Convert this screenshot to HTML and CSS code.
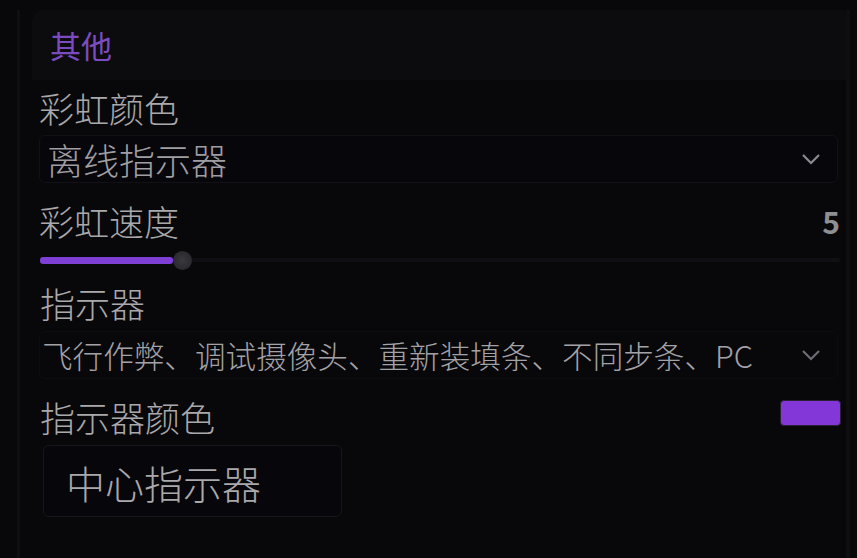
FILE: index.html
```html
<!DOCTYPE html>
<html lang="zh">
<head>
<meta charset="utf-8">
<title>其他</title>
<link rel="stylesheet" href="styles.css">
</head>
<body>
<div class="outer">
  <div class="panel">
    <div class="header"><span class="title">其他</span></div>
    <div class="body">
      <div class="label row-a">彩虹颜色</div>
      <div class="select">
        <span class="select-text">离线指示器</span>
        <svg class="chev" viewBox="0 0 20 12" width="20" height="12"><path d="M2 2 L10 10 L18 2" fill="none" stroke="#8d8a92" stroke-width="2.2"/></svg>
      </div>
      <div class="label-row">
        <span class="label">彩虹速度</span>
        <span class="value">5</span>
      </div>
      <div class="slider">
        <div class="track"></div>
        <div class="fill" style="width:133px"></div>
        <div class="thumb" style="left:133px"></div>
      </div>
      <div class="label row-c">指示器</div>
      <div class="select multi">
        <span class="select-text small">飞行作弊、调试摄像头、重新装填条、不同步条、PC</span>
        <svg class="chev" viewBox="0 0 20 12" width="20" height="12"><path d="M2 2 L10 10 L18 2" fill="none" stroke="#6f6c74" stroke-width="2.2"/></svg>
      </div>
      <div class="label-row color-row">
        <span class="label">指示器颜色</span>
        <span class="swatch"></span>
      </div>
      <div class="btn-wrap"><button class="btn">中心指示器</button></div>
    </div>
  </div>
</div>
</body>
</html>
```

FILE: styles.css
```css
html, body {
  margin: 0;
  padding: 0;
  background: #08070a;
  height: 100%;
  overflow: hidden;
}
body {
  font-family: "Noto Sans CJK SC", "Noto Sans", sans-serif;
  color: #a9a8ab;
}
.outer {
  height: 558px;
  padding-left: 17px;
  box-sizing: border-box;
}
.panel {
  height: 100%;
  padding-left: 12px;
  border-left: 3px solid #0f0e12;
  width: 833px;
  box-sizing: border-box;
  border-right: 4px solid #0e0d10;
}
.header {
  margin-top: 10px;
  height: 70px;
  background: #0c0b0e;
  border-radius: 12px 4px 0 0;
  box-sizing: border-box;
  padding: 17px 0 0 18px;
}
.title {
  font-size: 31px;
  line-height: 36px;
  color: #7b4cc0;
}
.body {
  padding: 0 8px 0 6px;
}
.label {
  font-size: 35px;
  line-height: 40px;
  color: #a9a8ab;
  display: block;
  font-weight: 300;
}
.row-a {
  margin-top: 8px;
  padding-left: 1px;
}
.select {
  margin-top: 7px;
  height: 48px;
  border: 1px solid #121116;
  border-radius: 6px;
  background: #07060a;
  display: flex;
  align-items: center;
  justify-content: space-between;
  padding: 0 16px 0 7px;
  box-sizing: border-box;
  margin-left: 1px;
}
.select-text {
  font-size: 36px;
  line-height: 40px;
  color: #9f9ea2;
  white-space: nowrap;
  font-weight: 300;
}
.select-text.small {
  font-size: 30.6px;
  color: #a3a2a6;
}
.chev { display: block; }
.label-row {
  display: flex;
  align-items: center;
  justify-content: space-between;
  margin-top: 18px;
  padding-left: 1px;
}
.value {
  font-size: 30px;
  font-weight: 700;
  color: #8f8e92;
  line-height: 40px;
  margin-right: -2px;
}
.slider {
  position: relative;
  height: 20px;
  margin-top: 9px;
  margin-left: 2px;
  margin-right: -2px;
}
.track {
  position: absolute;
  left: 0; right: 0;
  top: 8px;
  height: 4px;
  background: #101014;
  border-radius: 2px;
}
.fill {
  position: absolute;
  left: 0;
  top: 7px;
  height: 7px;
  background: #7d3fd4;
  border-radius: 3px;
}
.thumb {
  position: absolute;
  top: 1px;
  width: 19px;
  height: 19px;
  border-radius: 50%;
  background: radial-gradient(circle, #3a393e 0%, #2a292e 70%, #1b1a1e 100%);
}
.row-c {
  margin-top: 13px;
  padding-left: 2px;
}
.multi {
  margin-top: 8px;
  border-color: #0d0c10;
  background: #08070a;
  padding-left: 2px;
}
.color-row {
  margin-top: 18px;
  padding-left: 2px;
}
.swatch {
  width: 59px;
  height: 24px;
  border-radius: 4px;
  background: #8437d8;
  border: 1px solid #2a2234;
  margin-right: -3px;
  margin-top: -8px;
}
.btn-wrap {
  margin-top: 8px;
  padding-left: 5px;
}
.btn {
  width: 299px;
  height: 72px;
  background: #07060a;
  border: 1px solid #17161a;
  border-radius: 6px;
  font-family: "Noto Sans CJK SC", "Noto Sans", sans-serif;
  font-size: 39px;
  line-height: 44px;
  color: #a9a8ab;
  text-align: left;
  padding: 2px 0 0 22px;
  font-weight: 300;
}
```
